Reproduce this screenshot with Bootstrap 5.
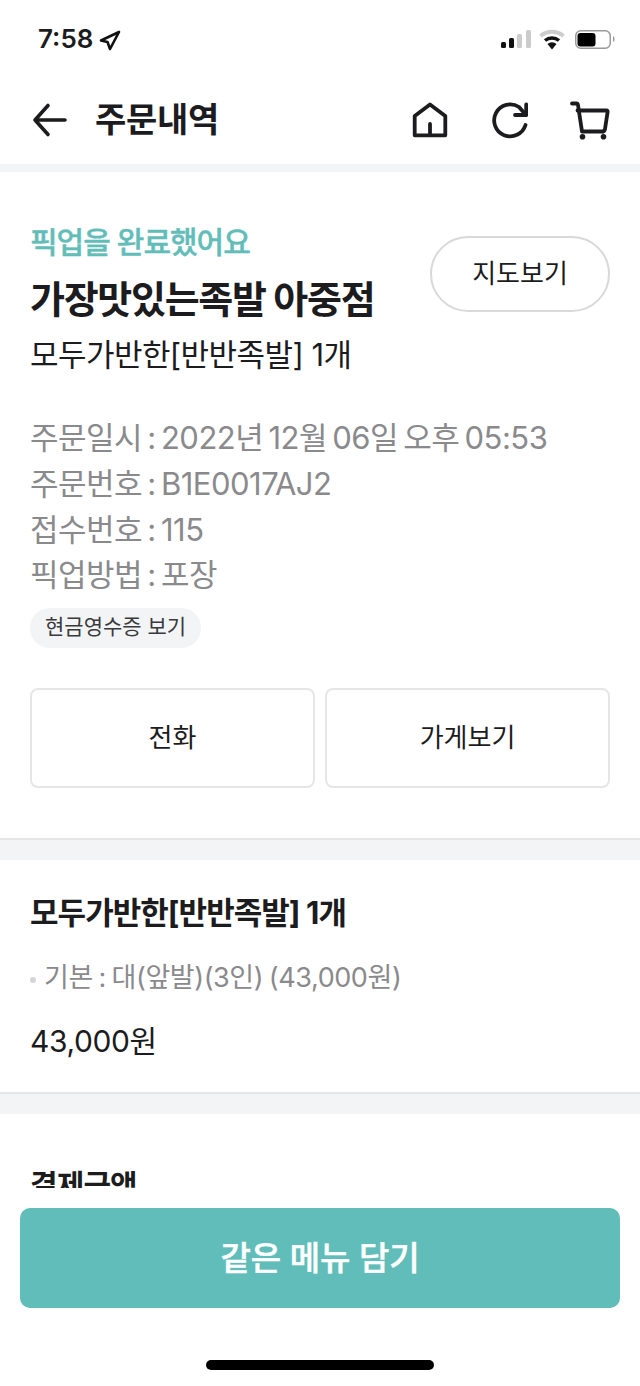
<!DOCTYPE html>
<html lang="ko">
<head>
<meta charset="UTF-8" />
<title>주문내역</title>
<link href="https://cdn.jsdelivr.net/npm/bootstrap@5.3.0/dist/css/bootstrap.min.css" rel="stylesheet" />
<style>
  html, body { height: 1386px; overflow: hidden; }
  body { font-family: Inter, "Noto Sans CJK KR", "Noto Sans", sans-serif; color: #1c1c1e; background: #fff; }
  .phone-status { height: 80px; padding: 22px 25px 0 38px; }
  .status-time { font-size: 26px; font-weight: 600; line-height: 34px; }
  .top-bar { height: 84px; padding: 0 30px 4px 32px; }
  .top-title { font-size: 34px; font-weight: 700; line-height: 40px; letter-spacing: -.3px; margin: -1px 0 0 27px; }
  .band { height: 8px; background: #f3f4f6; }
  .band-lined { height: 22px; background: #f3f4f6; border-top: 2px solid #e5e6e8; }
  .sec-one { height: 666px; padding: 50px 30px 0; }
  .pickup-state { font-size: 30px; font-weight: 500; line-height: 38px; color: #62bdb9; letter-spacing: -1px; margin-top: 1px; -webkit-text-stroke: .4px #62bdb9; }
  .shop-name { font-size: 38px; font-weight: 700; line-height: 46px; letter-spacing: -1.3px; margin: 15px 0 0; }
  .shop-menu { font-size: 31px; line-height: 40px; letter-spacing: -.55px; margin-top: 13px; }
  .map-btn { width: 180px; height: 76px; margin-top: 14px; border: 2px solid #d9d9d9; border-radius: 38px; font-size: 26px; color: #1c1c1e; padding: 0 0 2px; background: #fff; }
  .info-list { margin-top: 40px; font-size: 31px; line-height: 45.8px; color: #8a8a8d; letter-spacing: -.5px; word-spacing: -3px; }
  .receipt-pill { display: inline-block; height: 40px; padding: 0 15px; border-radius: 20px; background: #f3f4f6; font-size: 21px; line-height: 38px; color: #3a3a3c; margin-top: 10px; }
  .act-row { margin-top: 40px; gap: 10px; }
  .act-btn { height: 100px; flex: 1 1 0; border: 2px solid #e5e6e8; border-radius: 8px; font-size: 26px; background: #fff; color: #1c1c1e; padding: 0 0 2px; }
  .sec-two { height: 232px; padding: 31px 30px 0; }
  .menu-head { font-size: 31px; font-weight: 700; line-height: 44px; letter-spacing: -.95px; margin: 0; }
  .menu-opt { margin-top: 25px; font-size: 27px; line-height: 36px; color: #8a8a8d; letter-spacing: -.42px; word-spacing: -1.5px; }
  .opt-dot { width: 6px; height: 6px; border-radius: 50%; background: #d5d5d7; margin: 4px 8px 0 0; }
  .menu-price { margin-top: 24px; font-size: 30px; line-height: 42px; letter-spacing: -.4px; }
  .pay-sec { padding: 49px 30px 0; }
  .pay-head { font-size: 30px; font-weight: 700; line-height: 44px; letter-spacing: -.9px; margin: 0; }
  .bottom-dock { position: fixed; left: 0; right: 0; top: 1188px; bottom: 0; background: #fff; padding: 20px 20px 0; }
  .same-btn { height: 100px; width: 100%; border: 0; border-radius: 10px; background: #61bdb9; color: #fff; font-size: 33px; font-weight: 500; padding: 2px 0 0; letter-spacing: -.1px; -webkit-text-stroke: .5px #fff; }
  .home-line { width: 228px; height: 10px; border-radius: 5px; background: #000; margin: 52px auto 0; }
</style>
</head>
<body>
  <div class="phone-status d-flex justify-content-between">
    <div class="d-flex align-items-start gap-1">
      <span class="status-time">7:58</span>
      <svg class="mt-1" width="24" height="26" viewBox="0 0 24 26" fill="none" stroke="#111" stroke-width="2.6" stroke-linejoin="round"><path d="M22 6 4 14.500l6.500 1.500L13 23z"/></svg>
    </div>
    <svg class="mt-1" width="114" height="26" viewBox="0 0 114 26">
      <rect x="0" y="16" width="5" height="6" rx="1.500" fill="#111"/><rect x="8" y="12" width="5" height="10" rx="1.500" fill="#111"/>
      <rect x="16" y="8" width="5" height="14" rx="1.500" fill="#ccc"/><rect x="25" y="4" width="5" height="18" rx="1.500" fill="#ccc"/>
      <path d="M39.500 10a18 18 0 0 1 23 0" fill="none" stroke="#ccc" stroke-width="4"/>
      <path d="M44 14.500a11 11 0 0 1 14 0" fill="none" stroke="#111" stroke-width="3.400"/>
      <path d="M51 23.500l-4.500-5.500a6.500 6.500 0 0 1 9 0z" fill="#111"/>
      <rect x="74.750" y="4.750" width="34.500" height="17.500" rx="5" fill="none" stroke="#999" stroke-width="1.500"/>
      <rect x="76.500" y="7" width="18" height="13.500" rx="3" fill="#000"/>
      <path d="M112 10v6c2-.5 2-5.500 0-6z" fill="#999"/>
    </svg>
  </div>

  <div class="top-bar d-flex align-items-center justify-content-between">
    <div class="d-flex align-items-center">
      <svg width="36" height="36" viewBox="0 0 36 36" fill="none" stroke="#1c1c1e" stroke-width="3.600" stroke-linecap="round" stroke-linejoin="round"><path d="M33 18H3M16 3.500 3 18l13 14.500"/></svg>
      <h1 class="top-title">주문내역</h1>
    </div>
    <div class="d-flex align-items-center" style="gap:42px">
      <svg width="38" height="38" viewBox="0 0 38 38" fill="none" stroke="#1c1c1e" stroke-width="3.800" stroke-linejoin="round" stroke-linecap="round"><path d="M4.700 34.300V15L20 3.500 35.300 15v19.300zM20 34V23"/></svg>
      <svg width="38" height="38" viewBox="0 0 38 38" fill="none" stroke="#1c1c1e" stroke-width="3.800" stroke-linecap="round" stroke-linejoin="round"><path d="M35.500 24A16 16 0 1 1 29 6l7 8"/><path d="M36.200 3.500V14H25"/></svg>
      <svg width="40" height="40" viewBox="0 0 40 40" fill="none" stroke="#1c1c1e" stroke-width="3.800" stroke-linecap="round" stroke-linejoin="round"><path d="M2 3.500h4.500q1.200 0 1.500 1.500L12 31.500h21"/><path d="M7.500 10.500h29q1.300 0 1.100 1.500L35 29q-.4 2.500-2 2.500"/><circle cx="12.500" cy="36.700" r="2.800" fill="#1c1c1e" stroke="none"/><circle cx="33.500" cy="36.700" r="2.800" fill="#1c1c1e" stroke="none"/></svg>
    </div>
  </div>
  <div class="band"></div>

  <section class="sec-one">
    <div class="d-flex justify-content-between align-items-start">
      <div>
        <div class="pickup-state">픽업을 완료했어요</div>
        <h2 class="shop-name">가장맛있는족발 아중점</h2>
        <div class="shop-menu">모두가반한[반반족발] 1개</div>
      </div>
      <button type="button" class="btn map-btn">지도보기</button>
    </div>
    <div class="info-list">
      <div>주문일시 : 2022년 12월 06일 오후 05:53</div>
      <div>주문번호 : B1E0017AJ2</div>
      <div>접수번호 : 115</div>
      <div>픽업방법 : 포장</div>
    </div>
    <span class="receipt-pill">현금영수증 보기</span>
    <div class="act-row d-flex">
      <button type="button" class="btn act-btn">전화</button>
      <button type="button" class="btn act-btn">가게보기</button>
    </div>
  </section>
  <div class="band-lined"></div>

  <section class="sec-two">
    <h3 class="menu-head">모두가반한[반반족발] 1개</h3>
    <div class="menu-opt d-flex align-items-center"><span class="opt-dot"></span>기본 : 대(앞발)(3인) (43,000원)</div>
    <div class="menu-price">43,000원</div>
  </section>
  <div class="band-lined"></div>

  <section class="pay-sec">
    <h3 class="pay-head">결제금액</h3>
  </section>

  <div class="bottom-dock">
    <button type="button" class="same-btn">같은 메뉴 담기</button>
    <div class="home-line"></div>
  </div>

  <script src="https://cdn.jsdelivr.net/npm/bootstrap@5.3.0/dist/js/bootstrap.bundle.min.js"></script>
</body>
</html>
